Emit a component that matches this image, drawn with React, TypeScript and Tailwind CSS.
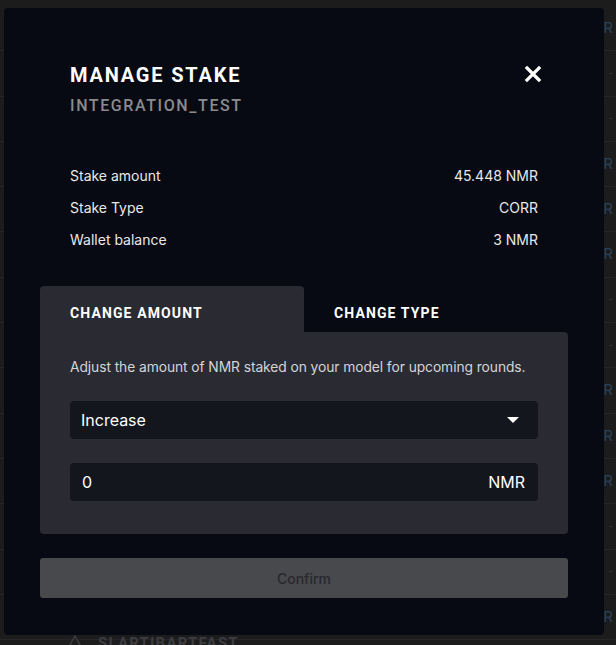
import React, { useState } from 'react';

const rows = ['R', '-', '-', 'R', 'R', 'R', '-', '-', 'R', 'R', 'R', '-', '-', 'R'];

const App: React.FC = () => {
  const [tab, setTab] = useState<'amount' | 'type'>('amount');
  const [amount, setAmount] = useState('0');

  return (
    <div className="relative w-[616px] h-[645px] overflow-hidden bg-[#1c1c1d] font-['Inter',sans-serif]">
      {/* page behind the modal */}
      <div className="pt-[6px]">
        {rows.map((r, i) => (
          <div key={i} className="h-[45.3px] border-b border-[#252628] flex items-center justify-end pr-[3px]">
            <span className={r === 'R' ? 'text-[15px] text-[#2a4258]' : 'text-[10px] text-[#3a3b3e]'}>{r}</span>
          </div>
        ))}
      </div>
      <div className="absolute left-[66px] top-[634px] flex items-center gap-[14px]">
        <svg width="18" height="16" viewBox="0 0 18 16" fill="none" stroke="#3c3d40" strokeWidth="1.5">
          <path d="M9 1 L17 15 L1 15 Z" />
        </svg>
        <span className="font-['Roboto',sans-serif] font-bold text-[15px] leading-[18px] tracking-[0.08em] text-[#3c3d40]">SLARTIBARTFAST</span>
      </div>

      {/* modal */}
      <div className="absolute left-[4px] top-[8px] w-[600px] h-[627px] rounded-[4px] bg-[#070a12] px-[36px]">
        <div className="flex justify-between items-start pt-[54px] px-[30px]">
          <div>
            <h2 className="font-['Roboto',sans-serif] font-bold text-[20px] leading-[26px] tracking-[0.09em] text-white">
              MANAGE STAKE
            </h2>
            <div className="mt-[8px] font-['Roboto',sans-serif] font-medium text-[16px] leading-[20px] tracking-[0.1em] text-[#8a8b8f]">
              INTEGRATION_TEST
            </div>
          </div>
          <button className="mt-[1px] mr-[-6px] text-white">
            <svg width="22" height="22" viewBox="0 0 22 22" stroke="currentColor" strokeWidth="3.2" strokeLinecap="square">
              <path d="M5 5 L17 17 M17 5 L5 17" />
            </svg>
          </button>
        </div>

        <div className="mt-[43px] px-[30px] flex flex-col text-[14px] text-[#e8e8ea]">
          {[
            ['Stake amount', '45.448 NMR'],
            ['Stake Type', 'CORR'],
            ['Wallet balance', '3 NMR'],
          ].map(([k, v]) => (
            <div key={k} className="flex justify-between h-[32px] items-center">
              <span>{k}</span>
              <span>{v}</span>
            </div>
          ))}
        </div>

        <div className="mt-[31px] flex">
          <button
            onClick={() => setTab('amount')}
            className={`w-[264px] h-[46px] pl-[30px] pt-[9px] text-left rounded-t-[4px] font-['Roboto',sans-serif] font-bold text-[14px] tracking-[0.08em] text-white ${tab === 'amount' ? 'bg-[#2a2a33]' : ''}`}
          >
            CHANGE AMOUNT
          </button>
          <button
            onClick={() => setTab('type')}
            className={`w-[264px] h-[46px] pl-[30px] pt-[9px] text-left rounded-t-[4px] font-['Roboto',sans-serif] font-bold text-[14px] tracking-[0.08em] text-white ${tab === 'type' ? 'bg-[#2a2a33]' : ''}`}
          >
            CHANGE TYPE
          </button>
        </div>
        <div className={`bg-[#2a2a33] h-[202px] px-[30px] pt-[26px] rounded-b-[4px] ${tab === 'amount' ? 'rounded-tr-[4px]' : 'rounded-tl-[4px]'}`}>
          <p className="text-[13.8px] leading-[18px] tracking-[-0.005em] text-[#d4d4d8]">
            Adjust the amount of NMR staked on your model for upcoming rounds.
          </p>
          <div className="mt-[25px] h-[38px] rounded-[4px] bg-[#13161d] flex items-center justify-between pl-[11px] pr-[19px] text-[16px] text-white">
            <span>Increase</span>
            <svg width="12" height="6" viewBox="0 0 12 6" fill="white">
              <path d="M0 0 H12 L6 6 Z" />
            </svg>
          </div>
          <div className="mt-[24px] h-[38px] rounded-[4px] bg-[#13161d] flex items-center justify-between pl-[12px] pr-[13px] text-[16px] text-white">
            <input
              value={amount}
              onChange={(e) => setAmount(e.target.value)}
              className="bg-transparent outline-none flex-1 text-white"
            />
            <span>NMR</span>
          </div>
        </div>

        <button className="mt-[24px] w-full h-[40px] rounded-[3px] bg-[#48494c] text-[14px] font-medium text-[#27282d]">
          Confirm
        </button>
      </div>
    </div>
  );
};

export default App;
